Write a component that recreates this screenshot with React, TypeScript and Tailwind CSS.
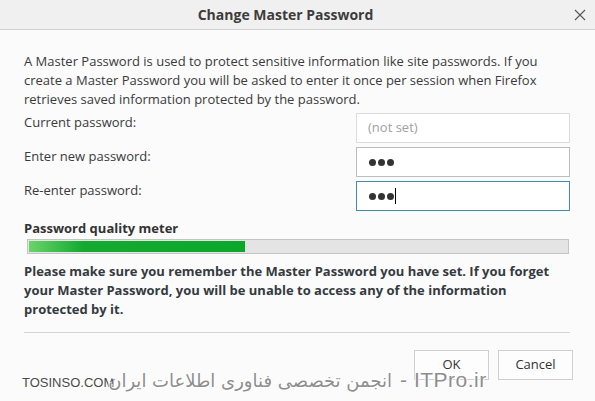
import React from "react";

const Field = (props: { label: string; children: React.ReactNode }) => {
  return (
    <>
      <label className="leading-[18px]">{props.label}</label>
      {props.children}
    </>
  );
};

const App = () => {
  return (
    <div className="relative w-[595px] h-[401px] overflow-hidden bg-[#fbfbfb] text-[13px] text-[#3a3a3a] font-['Open_Sans',sans-serif]">
      {/* Title bar */}
      <div className="relative flex items-center justify-center h-[30px] bg-[#f0f0f0] border-b border-[#d2d2d2]">
        <h1 className="font-bold text-[14px] text-[#3c3c3c] mr-[24px]">Change Master Password</h1>
        <svg className="absolute right-[8px] top-[8px]" width="14" height="14" viewBox="0 0 14 14">
          <path d="M2 2 L12 12 M12 2 L2 12" stroke="#555" strokeWidth="1.1" fill="none" />
        </svg>
      </div>

      <div className="px-[24px] pt-[22px]">
        <p className="leading-[19px]">
          A Master Password is used to protect sensitive information like site passwords. If you create a Master
          Password you will be asked to enter it once per session when Firefox retrieves saved information
          protected by the password.
        </p>

        <div className="grid grid-cols-[1fr_214px] gap-y-[4px] mt-[4px] mr-[1px]">
          <Field label="Current password:">
            <div className="h-[30px] border border-[#dcdcdc] bg-white flex items-center px-[11px] text-[#a0a0a0]">
              (not set)
            </div>
          </Field>
          <Field label="Enter new password:">
            <div className="h-[30px] border border-[#bcbcbc] bg-white flex items-center px-[12px] gap-[2px]">
              <Dots />
            </div>
          </Field>
          <Field label="Re-enter password:">
            <div className="h-[30px] border border-[#3f8fa8] bg-white flex items-center px-[12px] gap-[2px]">
              <Dots />
              <span className="w-[1px] h-[16px] bg-black ml-[-1px]" />
            </div>
          </Field>
        </div>

        <h2 className="font-bold mt-[8px] leading-[19px] text-[#333]">Password quality meter</h2>
        <div className="ml-[3px] mr-[2px] mt-[1px] h-[15px] border border-[#c4c4c4] bg-[#e4e4e4] p-[1px]">
          <div className="h-full w-[216px] bg-[linear-gradient(to_right,#6bd36b,#14aa30_25%,#0aa82a)]" />
        </div>

        <p className="font-bold mt-[8px] leading-[19px] text-[#353a40]">
          Please make sure you remember the Master Password you have set. If you forget your Master Password, you
          will be unable to access any of the information protected by it.
        </p>

        <hr className="mt-[13px] border-[#d4d4d4] mr-[1px]" />

        <div className="flex justify-end gap-[9px] mt-[17px] mr-[-2px]">
          <button className="w-[75px] h-[30px] border border-[#cfcfcf] bg-[#fdfdfd] text-[#333]">OK</button>
          <button className="w-[75px] h-[30px] border border-[#cfcfcf] bg-[#fdfdfd] text-[#333]">Cancel</button>
        </div>
      </div>

      {/* watermark */}
      <div className="absolute left-[22px] top-[364px] flex items-baseline [text-shadow:1px_1px_0_#fff,-1px_-1px_0_#fff]">
        <span className="text-[13px] text-[#4a4a4a] font-['Liberation_Sans',sans-serif]">TOSINSO.COM</span>
        <span className="ml-[-6px] text-[18px] text-[#8e8e8e] font-['DejaVu_Sans',sans-serif]">
          انجمن تخصصی فناوری اطلاعات ایران
        </span>
        <span className="ml-[8px] text-[21px] text-[#8e8e8e] font-['Liberation_Sans',sans-serif] tracking-[0.5px]">
          - ITPro.ir
        </span>
      </div>
    </div>
  );
};

const Dots = () => (
  <>
    <span className="w-[7px] h-[7px] rounded-full bg-[#333]" />
    <span className="w-[7px] h-[7px] rounded-full bg-[#333]" />
    <span className="w-[7px] h-[7px] rounded-full bg-[#333]" />
  </>
);

export default App;
